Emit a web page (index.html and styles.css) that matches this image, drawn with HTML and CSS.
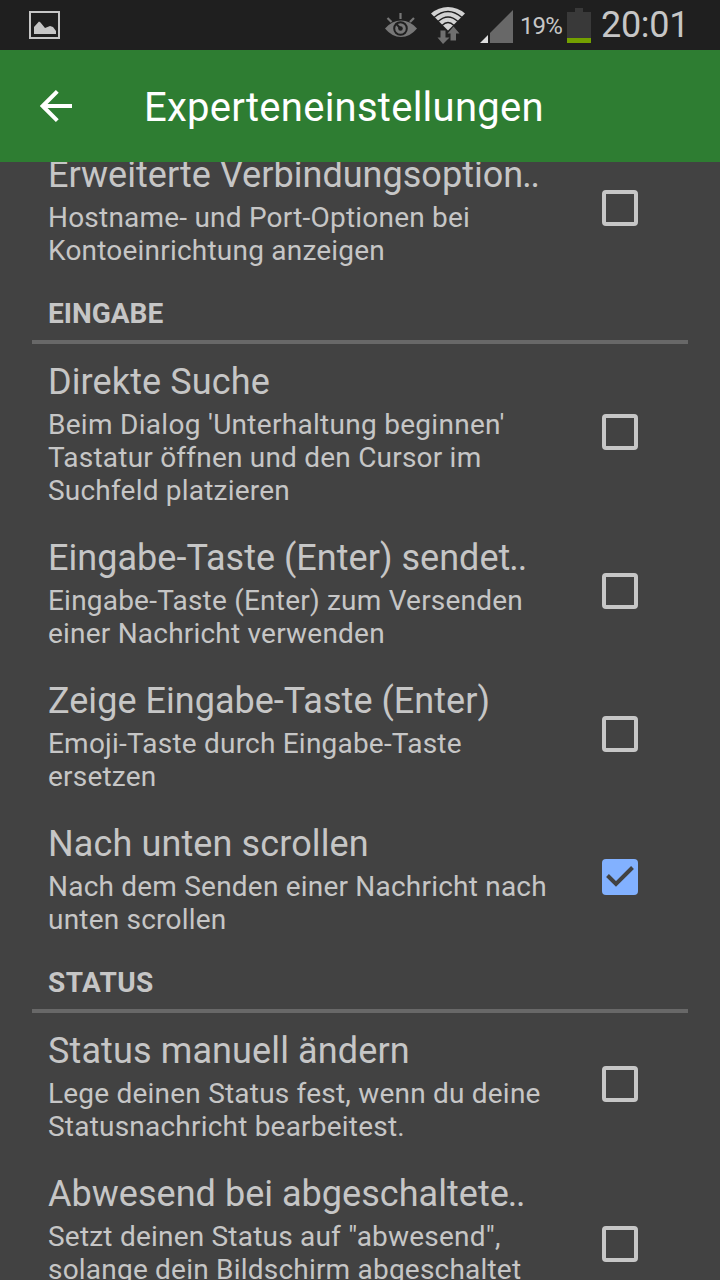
FILE: index.html
```
<!DOCTYPE html>
<html lang="de">
<head>
<meta charset="utf-8">
<title>Experteneinstellungen</title>
<link rel="stylesheet" href="styles.css">
</head>
<body>
<div class="screen">
  <header class="statusbar">
    <svg class="ic-picture" width="31" height="28" viewBox="0 0 31 28"><rect x="1" y="1" width="29" height="26" fill="none" stroke="#c6c6c6" stroke-width="2"/><path d="M5 23V16L10 10.500L11.500 11.500L16 17L21 15L24 16L27 20V23Z" fill="#c6c6c6"/></svg>
    <svg class="ic-eye" width="32" height="24" viewBox="0 0 32 24"><path d="M2.500 5L6.500 9M15.500 0V6M29 5L25 9" fill="none" stroke="#777" stroke-width="2.200"/><path d="M0 15.500Q7 7.500 16 7.500Q25 7.500 32 15.500Q25 24 16 24Q7 24 0 15.500Z" fill="#777"/><circle cx="15.500" cy="15.500" r="6.300" fill="#777" stroke="#1f1f1f" stroke-width="2"/><circle cx="15.500" cy="15.500" r="2.300" fill="#1f1f1f"/><path d="M15.500 15.500L11 10.500" stroke="#1f1f1f" stroke-width="2"/></svg>
    <svg class="ic-wifi" width="36" height="38" viewBox="0 0 36 38"><path d="M18 24.500L1 7.500Q8.500 1 18 1Q27.500 1 35 7.500Z" fill="#d2d2d2"/><g fill="none" stroke="#1f1f1f" stroke-width="1.300"><path d="M4 11.500Q18 -0.500 32 11.500"/><path d="M8 15.500Q18 6.500 28 15.500"/><path d="M12 19.500Q18 13.500 24 19.500"/></g><path d="M10.500 24.500H15.500V31.500H19.500L13 38L7.500 31.500H10.500ZM20.500 34.500V27.500H17.500L23.500 20.500L29.500 27.500H26V34.500Z" fill="#6f6f6f"/></svg>
    <svg class="ic-signal" width="33" height="33" viewBox="0 0 33 33"><path d="M10 33V23L33 0V33Z" fill="#686868"/><path d="M0 33L8 25V33Z" fill="#dedede"/></svg>
    <span class="percent">19%</span>
    <svg class="ic-battery" width="24" height="35" viewBox="0 0 24 35"><path d="M0 4H8V0H16V4H24V30H0Z" fill="#393939"/><rect y="30" width="24" height="5" fill="#73a000"/></svg>
    <span class="clock">20:01</span>
  </header>
  <nav class="appbar">
    <svg class="back" width="32" height="32" viewBox="0 0 32 32"><path d="M32 16H3M17.300 1.400L2.700 16L17.300 30.600" fill="none" stroke="#fff" stroke-width="4"/></svg>
    <h1 class="heading">Experteneinstellungen</h1>
  </nav>
  <main class="viewport">
    <div class="list">
      <section class="row"><div class="copy"><h3 class="title tight">Erweiterte Verbindungsoption<span class="dots">..</span></h3><p class="summary">Hostname- und Port-Optionen bei<br>Kontoeinrichtung anzeigen</p></div><span class="box"></span></section>
      <h2 class="category">EINGABE</h2>
      <section class="row tall"><div class="copy"><h3 class="title">Direkte Suche</h3><p class="summary"><span class="loose">Beim Dialog 'Unterhaltung beginnen'</span><br>Tastatur öffnen und den Cursor im<br>Suchfeld platzieren</p></div><span class="box"></span></section>
      <section class="row"><div class="copy"><h3 class="title tight">Eingabe-Taste (Enter) sendet<span class="dots">..</span></h3><p class="summary">Eingabe-Taste (Enter) zum Versenden<br>einer Nachricht verwenden</p></div><span class="box"></span></section>
      <section class="row"><div class="copy"><h3 class="title tight">Zeige Eingabe-Taste (Enter)</h3><p class="summary">Emoji-Taste durch Eingabe-Taste<br>ersetzen</p></div><span class="box"></span></section>
      <section class="row"><div class="copy"><h3 class="title">Nach unten scrollen</h3><p class="summary">Nach dem Senden einer Nachricht nach<br>unten scrollen</p></div><span class="box checked"><svg width="36" height="36" viewBox="0 0 36 36"><path d="M5.500 16.500L14 25L30.500 8.500" fill="none" stroke="#424242" stroke-width="4"/></svg></span></section>
      <h2 class="category wide">STATUS</h2>
      <section class="row"><div class="copy"><h3 class="title">Status manuell ändern</h3><p class="summary">Lege deinen Status fest, wenn du deine<br>Statusnachricht bearbeitest.</p></div><span class="box"></span></section>
      <section class="row tall"><div class="copy"><h3 class="title tight">Abwesend bei abgeschaltete<span class="dots">..</span></h3><p class="summary">Setzt deinen Status auf "abwesend",<br>solange dein Bildschirm abgeschaltet<br>ist</p></div><span class="box"></span></section>
    </div>
  </main>
</div>
</body>
</html>
```
FILE: styles.css
```
* { box-sizing: border-box; }
body, h1, h2, h3, p { margin: 0; }
body { font-family: Roboto, "Noto Sans", sans-serif; background: #424242; }
.screen { width: 720px; height: 1280px; overflow: hidden; display: flex; flex-direction: column; background: #424242; color: #c6c6c6; }
.statusbar { height: 50px; flex: none; background: #1f1f1f; display: flex; align-items: flex-start; padding-left: 29px; }
.statusbar svg, .back { flex: none; display: block; }
.ic-picture { margin-top: 11px; }
.ic-eye { margin: 13px 0 0 325px; }
.ic-wifi { margin: 6px 0 0 13px; }
.ic-signal { margin: 10px 0 0 14px; }
.percent { margin: 12px 0 0 7px; width: 47px; font-size: 24px; line-height: 28px; white-space: nowrap; letter-spacing: -0.9px; }
.ic-battery { margin-top: 8px; }
.clock { margin: 4px 0 0 10px; font-size: 36px; line-height: 42px; letter-spacing: -0.3px; }
.appbar { height: 112px; flex: none; background: #2e7d32; display: flex; align-items: center; padding-left: 40px; }
.heading { margin: 4px 0 0 72px; color: #fff; font-size: 40px; line-height: 48px; font-weight: 400; white-space: nowrap; letter-spacing: 0.25px; }
.viewport { flex: 1; min-height: 0; overflow: hidden; }
.list { margin-top: -25px; padding: 0 32px; }
.row { display: flex; align-items: center; justify-content: space-between; padding: 0 50px 0 16px; }
.copy { padding: 17px 0 13px; white-space: nowrap; }
.title { font-size: 36px; line-height: 42px; font-weight: 400; margin-bottom: 5px; letter-spacing: 0.12px; }
.tight { letter-spacing: 0.03px; }
.dots { letter-spacing: -1.2px; margin-left: -1px; }
.summary { font-size: 28px; line-height: 33px; letter-spacing: 0.21px; }
.loose { letter-spacing: 0.29px; }
.category { height: 64px; padding: 17px 16px 0; border-bottom: 4px solid #686868; font-size: 28px; line-height: 33px; font-weight: 700; }
.wide { letter-spacing: 0.4px; }
.box { width: 36px; height: 36px; flex: none; border: 4px solid #c6c6c6; border-radius: 4px; margin-bottom: 1px; }
.tall .box { margin-bottom: 0; }
.checked { border: 0; background: #82b1ff; }
.checked svg { display: block; }
```
